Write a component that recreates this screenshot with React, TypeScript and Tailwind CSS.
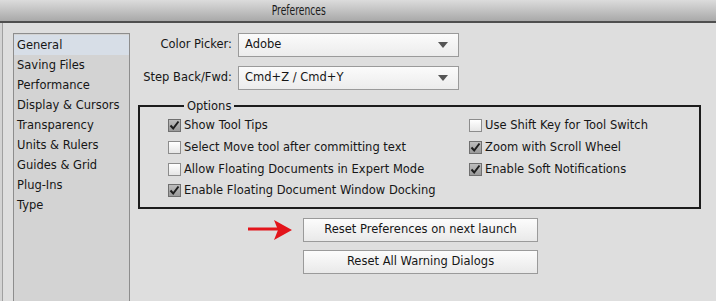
import React from 'react'

const font = { fontFamily: '"Lucida Grande", "DejaVu Sans", Verdana, sans-serif' }

const sections = [
  'General',
  'Saving Files',
  'Performance',
  'Display & Cursors',
  'Transparency',
  'Units & Rulers',
  'Guides & Grid',
  'Plug-Ins',
  'Type',
]

const Checkbox = ({ checked, label }: { checked?: boolean; label: string }) => (
  <div className="flex items-center h-[21.7px]">
    <span
      className={
        checked
          ? 'w-[13px] h-[13px] border border-[#6f6f6f] bg-gradient-to-b from-[#bdbdbd] to-[#9a9a9a] flex items-center justify-center'
          : 'w-[13px] h-[13px] border border-[#8c8c8c] bg-gradient-to-b from-[#ffffff] to-[#e6e6e6]'
      }
    >
      {checked && (
        <svg width="11" height="11" viewBox="0 0 11 11">
          <path d="M1.5 5.5 L4.2 8.5 L9.5 1.5" fill="none" stroke="#1e1e1e" strokeWidth="2" />
        </svg>
      )}
    </span>
    <span className="ml-[3px] text-[11.5px] text-[#161616]">{label}</span>
  </div>
)

const Select = ({ value }: { value: string }) => (
  <div className="w-[221px] h-[24px] border border-[#9a9a9a] bg-gradient-to-b from-[#fbfbfb] to-[#ececec] flex items-center justify-between pl-[6px] pr-[10px]">
    <span className="text-[11.5px] text-[#161616]">{value}</span>
    <svg width="10" height="6" viewBox="0 0 10 6">
      <path d="M0 0 H10 L5 6 Z" fill="#555" />
    </svg>
  </div>
)

const Button = ({ label }: { label: string }) => (
  <button className="w-[235px] h-[24px] border border-[#9a9a9a] bg-gradient-to-b from-[#fcfcfc] to-[#e9e9e9] text-[11.5px] text-[#161616] flex items-center justify-center">
    {label}
  </button>
)

export default function App() {
  return (
    <div className="w-[716px] h-[301px] overflow-hidden bg-[#dedede] flex flex-col" style={font}>
      {/* title bar */}
      <div className="h-[23px] shrink-0 bg-gradient-to-b from-[#dcdcdc] to-[#a9a9a9] border-b-2 border-[#4f4f4f] flex items-center justify-center pr-[118px]">
        <span className="inline-block scale-x-[0.68] text-[13.5px] text-[#1a1a1a]">Preferences</span>
      </div>

      <div className="flex flex-1">
        <div className="w-[3px] bg-[#d3d3d3] border-r border-[#a0a0a0]" />
        <div className="flex flex-1 pl-[10px]">
          {/* sidebar */}
          <div className="w-[117px] mt-[10px] bg-[#d3d3d3] border border-[#8d8d8d] border-b-0 pt-[1px]">
            {sections.map((s, i) => (
              <div
                key={s}
                className={
                  i === 0
                    ? 'h-[20px] pl-[3px] pt-[1px] flex items-center bg-[#d7dee7] text-[11.5px] text-[#161616]'
                    : 'h-[20px] pl-[3px] pt-[1px] flex items-center text-[11.5px] text-[#161616]'
                }
              >
                {s}
              </div>
            ))}
          </div>

          {/* main */}
          <div className="flex-1 pl-[8px] pt-[10px] pr-[14px]">
            <div className="flex flex-col gap-[9px]">
              <div className="flex items-center">
                <span className="w-[100px] text-right pr-[6px] text-[11.5px] text-[#161616]">Color Picker:</span>
                <Select value="Adobe" />
              </div>
              <div className="flex items-center">
                <span className="w-[100px] text-right pr-[6px] text-[11.5px] text-[#161616]">Step Back/Fwd:</span>
                <Select value="Cmd+Z / Cmd+Y" />
              </div>
            </div>

            <fieldset className="mt-[8px] w-[563px] h-[111px] border-2 border-[#1c1c1c] pl-[28px] pr-[10px]">
              <legend className="ml-[16px] px-[3px] text-[11.5px] text-[#161616] leading-[16px]">Options</legend>
              <div className="flex mt-[1px]">
                <div className="w-[301px] flex flex-col">
                  <Checkbox checked label="Show Tool Tips" />
                  <Checkbox label="Select Move tool after committing text" />
                  <Checkbox label="Allow Floating Documents in Expert Mode" />
                  <Checkbox checked label="Enable Floating Document Window Docking" />
                </div>
                <div className="flex flex-col">
                  <Checkbox label="Use Shift Key for Tool Switch" />
                  <Checkbox checked label="Zoom with Scroll Wheel" />
                  <Checkbox checked label="Enable Soft Notifications" />
                </div>
              </div>
            </fieldset>

            <div className="flex mt-[9px]">
              <div className="w-[165px] flex items-start justify-end pr-[10px] pt-[1px]">
                <svg width="45" height="22" viewBox="0 0 45 22">
                  <path d="M0 10 H30" stroke="#e3141b" strokeWidth="3" />
                  <path d="M26 1 L44 11 L26 21 L30 11 Z" fill="#e3141b" />
                </svg>
              </div>
              <div className="flex flex-col gap-[8px]">
                <Button label="Reset Preferences on next launch" />
                <Button label="Reset All Warning Dialogs" />
              </div>
            </div>
          </div>
        </div>
      </div>
    </div>
  )
}
